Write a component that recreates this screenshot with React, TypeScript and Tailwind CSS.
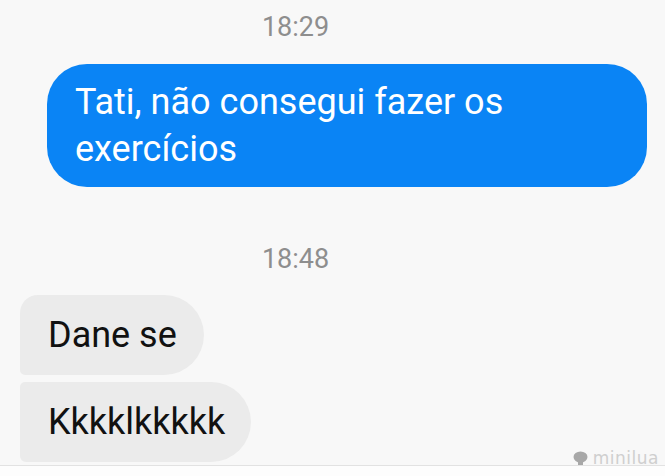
export default function App() {
  return (
    <div className="relative w-[665px] h-[476px] overflow-hidden bg-[#f8f8f8] font-['Roboto',sans-serif]">
      <div className="flex flex-col">
        <div className="pt-[12px] pr-[74px] text-center text-[27px] leading-[30px] text-[#8e8e8e]">18:29</div>
        <div className="mt-[22px] ml-[47px] mr-[18px] rounded-[40px] bg-[#0a84f5] pl-[28px] pr-[20px] pt-[15px] pb-[14px] text-[36px] leading-[47px] text-white">
          Tati, não consegui fazer os
          <br />
          exercícios
        </div>
        <div className="mt-[57px] pr-[74px] text-center text-[27px] leading-[30px] text-[#8e8e8e]">18:48</div>
        <div className="mt-[21px] ml-[20px] flex flex-col items-start gap-[7px]">
          <div className="rounded-tl-[18px] rounded-tr-[40px] rounded-br-[40px] rounded-bl-[5px] bg-[#ebebeb] pl-[28px] pr-[27px] py-[18px] text-[36px] leading-[44px] text-[#111]">
            Dane se
          </div>
          <div className="rounded-tl-[5px] rounded-tr-[40px] rounded-br-[40px] rounded-bl-[6px] bg-[#ebebeb] pl-[28px] pr-[26px] py-[18px] text-[36px] leading-[44px] text-[#111]">
            Kkkklkkkkk
          </div>
        </div>
      </div>
      <div className="absolute left-0 right-0 bottom-0 h-[11px] border-t border-[#e2e2e2] bg-[#fdfdfd]" />
      <div className="absolute right-[6px] bottom-[9px] flex items-center gap-[5px] text-[17px] leading-[18px] text-[#cfcfcf] font-['DejaVu_Sans',sans-serif]">
        <svg width="15" height="14" viewBox="0 0 15 14">
          <ellipse cx="7.5" cy="6" rx="7" ry="5.5" fill="#a8a8a8" />
          <rect x="5" y="9" width="5" height="5" fill="#a8a8a8" />
        </svg>
        <span className="tracking-[0.5px]">minilua</span>
      </div>
    </div>
  );
}
